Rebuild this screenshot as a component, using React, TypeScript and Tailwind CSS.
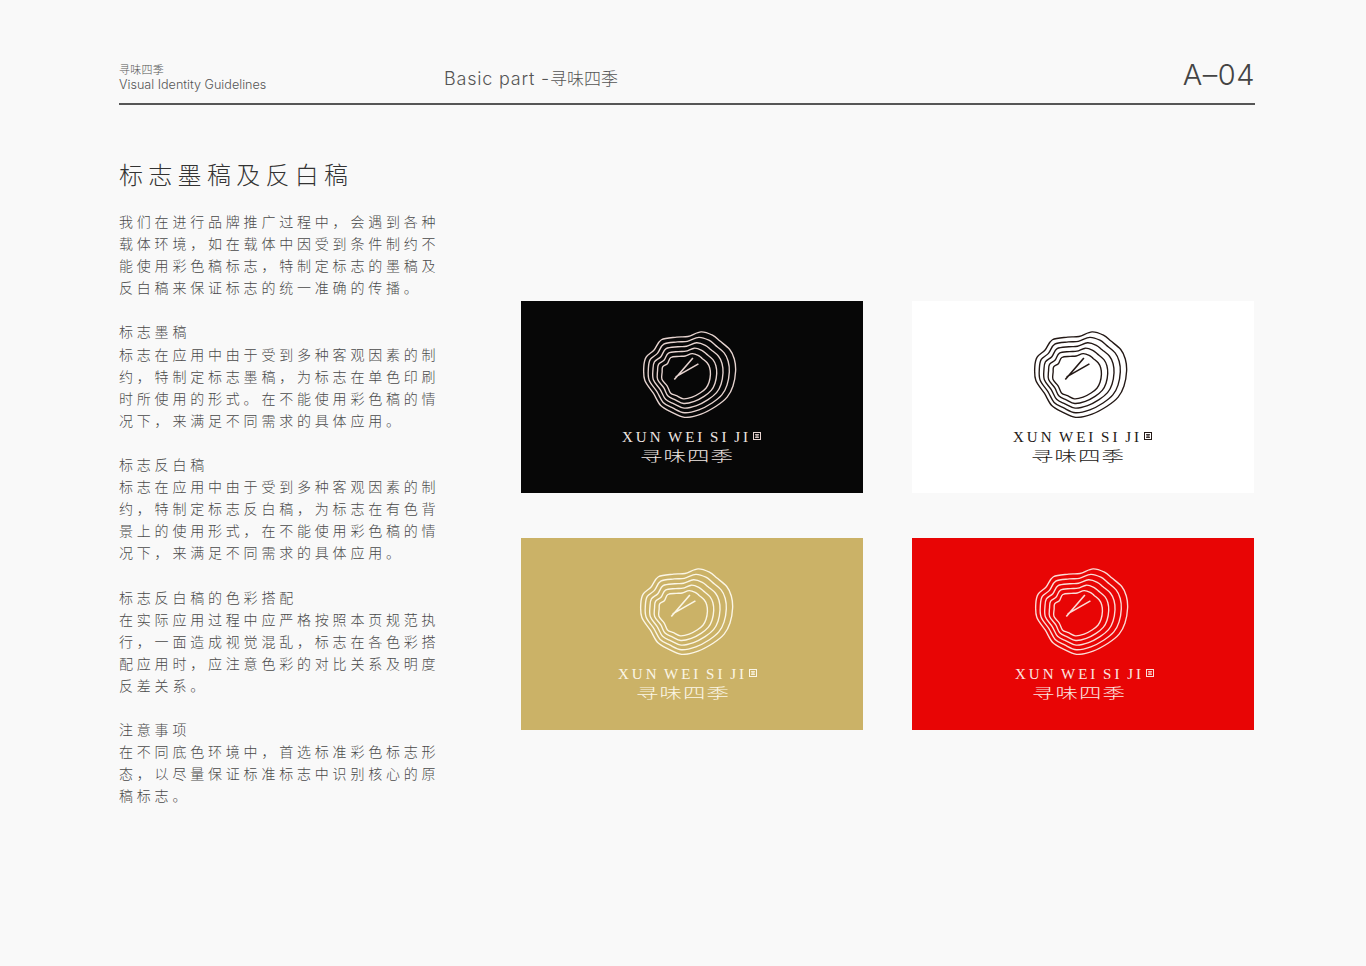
const OUTER = [[190,12],[225,22],[248,40],[278,66],[292,95],[296,132],[288,178],[270,212],[236,240],[190,264],[140,274],[98,260],[68,236],[42,202],[20,160],[12,118],[24,90],[44,66],[70,38],[115,28],[150,26]];
const OUTER_CENTER = [153, 143];
const INNER_CENTER = [143, 148];
const INNER_SCALE = 0.53;

// closed smooth curve through the ring points
function ringPath(t: number) {
  const pts = OUTER.map((p, i) => {
    const dx = p[0] - OUTER_CENTER[0];
    const dy = p[1] - OUTER_CENTER[1];
    const len = Math.hypot(dx, dy);
    const inner = [INNER_CENTER[0] + dx * INNER_SCALE, INNER_CENTER[1] + dy * INNER_SCALE];
    // the left side zigzags, all rings in step so they stay parallel
    const ripple = i >= 11 && i <= 18 ? (i % 2 === 0 ? 2.5 : -2.5) : 0;
    return [
      p[0] + (inner[0] - p[0]) * t + (dx / len) * ripple,
      p[1] + (inner[1] - p[1]) * t + (dy / len) * ripple,
    ];
  });
  const n = pts.length;
  let d = `M${pts[0][0]} ${pts[0][1]}`;
  for (let i = 0; i < n; i++) {
    const p0 = pts[(i - 1 + n) % n];
    const p1 = pts[i];
    const p2 = pts[(i + 1) % n];
    const p3 = pts[(i + 2) % n];
    const c1x = p1[0] + (p2[0] - p0[0]) / 6;
    const c1y = p1[1] + (p2[1] - p0[1]) / 6;
    const c2x = p2[0] - (p3[0] - p1[0]) / 6;
    const c2y = p2[1] - (p3[1] - p1[1]) / 6;
    d += `C${c1x} ${c1y} ${c2x} ${c2y} ${p2[0]} ${p2[1]}`;
  }
  return d + 'Z';
}

const RINGS = [0, 0.25, 0.5, 0.75, 1].map((t) => ringPath(t));

function Rings({ stroke, className }: { stroke: string; className: string }) {
  return (
    <svg viewBox="0 0 300 276" className={className} fill="none" stroke={stroke}>
      {RINGS.map((d, i) => (
        <path key={i} d={d} strokeWidth={4.2} />
      ))}
      <path d="M108 158L165 92M112 150L182 110" strokeWidth={5} />
    </svg>
  );
}

function Seal({ color }: { color: string }) {
  return (
    <svg viewBox="0 0 8 8" className="w-2 h-2 mb-[3px]" fill="none" stroke={color} strokeWidth={1}>
      <rect x="0.5" y="0.5" width="7" height="7" />
      <path d="M2 2.5H6M2 4H6M2 5.5H6M4 2V6" strokeWidth={0.8} />
    </svg>
  );
}

type LogoProps = {
  stroke: string;
  text: string;
  ringClass: string;
  cnClass: string;
};

function Logo({ stroke, text, ringClass, cnClass }: LogoProps) {
  return (
    <div className="flex flex-col items-start">
      <Rings stroke={stroke} className={ringClass} />
      <div className="mt-[11px] flex items-center gap-[2px]">
        <span className={`font-['Liberation_Serif',serif] text-[15px] leading-[16px] tracking-[3px] [word-spacing:-2px] whitespace-nowrap ${text}`}>
          XUN WEI SI JI
        </span>
        <Seal color={stroke} />
      </div>
      <div className={`mt-[1px] font-['Noto_Sans_CJK_SC',sans-serif] font-light text-[14px] leading-[18px] tracking-[0.7px] scale-x-[1.6] origin-left whitespace-nowrap ${text} ${cnClass}`}>
        寻味四季
      </div>
    </div>
  );
}

const SECTIONS = [
  ['我们在进行品牌推广过程中，会遇到各种', '载体环境，如在载体中因受到条件制约不', '能使用彩色稿标志，特制定标志的墨稿及', '反白稿来保证标志的统一准确的传播。'],
  ['标志墨稿', '标志在应用中由于受到多种客观因素的制', '约，特制定标志墨稿，为标志在单色印刷', '时所使用的形式。在不能使用彩色稿的情', '况下，来满足不同需求的具体应用。'],
  ['标志反白稿', '标志在应用中由于受到多种客观因素的制', '约，特制定标志反白稿，为标志在有色背', '景上的使用形式，在不能使用彩色稿的情', '况下，来满足不同需求的具体应用。'],
  ['标志反白稿的色彩搭配', '在实际应用过程中应严格按照本页规范执', '行，一面造成视觉混乱，标志在各色彩搭', '配应用时，应注意色彩的对比关系及明度', '反差关系。'],
  ['注意事项', '在不同底色环境中，首选标准彩色标志形', '态，以尽量保证标准标志中识别核心的原', '稿标志。'],
];

export default function App() {
  return (
    <div className="w-[1366px] h-[966px] bg-[#f9f9f9] pt-[60px] pl-[119px] pr-[111px] overflow-hidden font-['Noto_Sans_CJK_SC',sans-serif] text-[#3e3e3e]">
      <header className="h-[45px] border-b-2 border-[#565656] flex items-start">
        <div className="w-[325px] pt-[2px]">
          <div className="text-[11px] leading-[14px] tracking-[0.25px] font-light text-[#555]">寻味四季</div>
          <div className="font-['Inter',sans-serif] font-light text-[12.6px] leading-[17px] text-[#555]">Visual Identity Guidelines</div>
        </div>
        <div className="pt-[5px] text-[17px] leading-[26px] font-light text-[#555] whitespace-nowrap">
          <span className="font-['Inter',sans-serif] text-[18px] tracking-[0.8px]">Basic part -</span>寻味四季
        </div>
        <div className="ml-auto font-['Inter',sans-serif] font-light text-[29px] leading-[30px] tracking-[0.5px] text-[#444]">A–04</div>
      </header>

      <div className="flex">
        <div className="w-[402px] shrink-0">
          <h1 className="mt-[53px] text-[24px] leading-[32px] font-light tracking-[5.3px] text-[#333]">标志墨稿及反白稿</h1>
          <div className="mt-[20px] flex flex-col gap-[22.1px] text-[14px] leading-[22.1px] tracking-[3.8px] font-light text-[#4a4a4a]">
            {SECTIONS.map((lines, i) => (
              <div key={i}>
                {lines.map((line) => (
                  <div key={line} className="whitespace-nowrap">{line}</div>
                ))}
              </div>
            ))}
          </div>
        </div>

        <div className="mt-[196px] grid grid-cols-[342px_342px] grid-rows-[192px_192px] gap-x-[49px] gap-y-[45px]">
          <div className="bg-[#070707] pl-[101px] pt-[27px] flex">
            <Logo stroke="#e6d3cf" text="text-[#efe6e2]" ringClass="ml-[17px] w-[98px] h-[90px]" cnClass="ml-[18px]" />
          </div>
          <div className="bg-white pl-[101px] pt-[27px] flex">
            <Logo stroke="#231815" text="text-[#231815]" ringClass="ml-[17px] w-[98px] h-[90px]" cnClass="ml-[18px]" />
          </div>
          <div className="bg-[#cbb267] pl-[97px] pt-[27px] flex">
            <Logo stroke="#fbf6e6" text="text-[#fbf6e6]" ringClass="ml-[18px] w-[98px] h-[90px]" cnClass="ml-[18px]" />
          </div>
          <div className="bg-[#e80505] pl-[103px] pt-[27px] flex">
            <Logo stroke="#fbdcd6" text="text-[#fbe6e0]" ringClass="ml-[16px] w-[98px] h-[90px]" cnClass="ml-[17px]" />
          </div>
        </div>
      </div>
    </div>
  );
}
